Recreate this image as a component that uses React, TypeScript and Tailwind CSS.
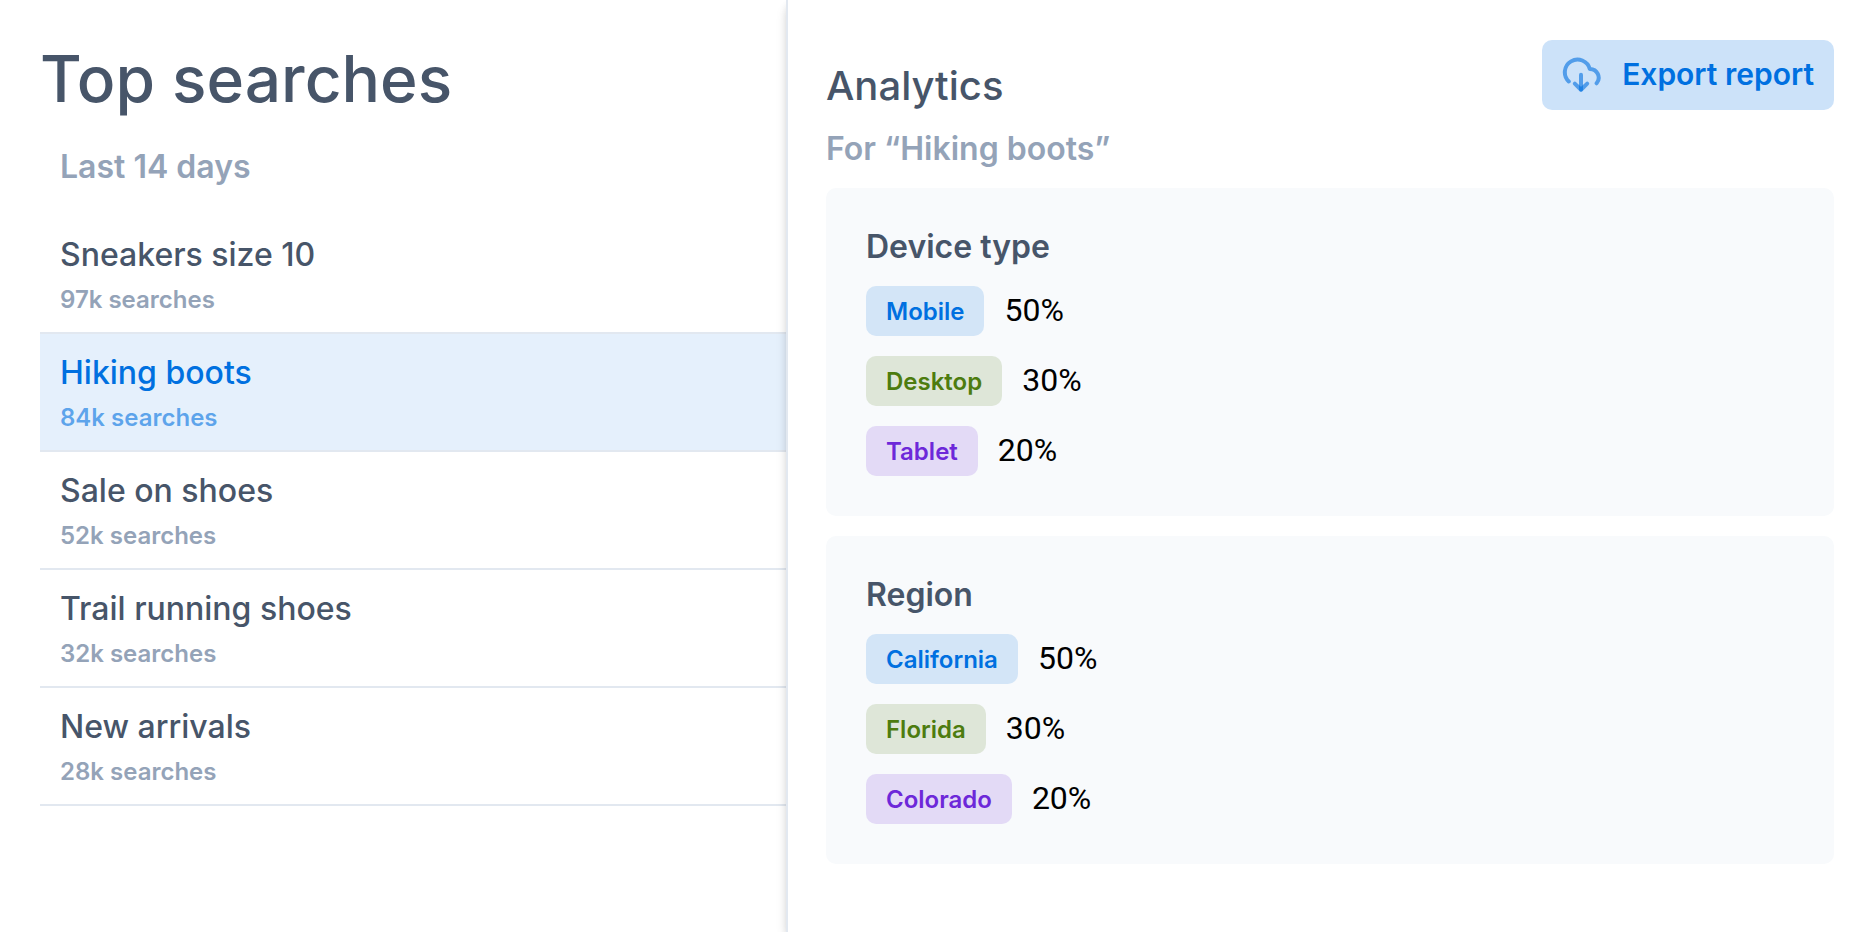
import { useState } from 'react';

interface Search {
  term: string;
  count: string;
}

interface Share {
  label: string;
  percent: number;
}

const searches: Search[] = [
  { term: 'Sneakers size 10', count: '97k' },
  { term: 'Hiking boots', count: '84k' },
  { term: 'Sale on shoes', count: '52k' },
  { term: 'Trail running shoes', count: '32k' },
  { term: 'New arrivals', count: '28k' },
];

const devices: Share[] = [
  { label: 'Mobile', percent: 50 },
  { label: 'Desktop', percent: 30 },
  { label: 'Tablet', percent: 20 },
];

const regions: Share[] = [
  { label: 'California', percent: 50 },
  { label: 'Florida', percent: 30 },
  { label: 'Colorado', percent: 20 },
];

const tagColors = [
  'bg-[#0070e0]/15 text-[#0070e0]',
  'bg-[#4d7c0f]/15 text-[#4d7c0f]',
  'bg-[#6d28d9]/15 text-[#6d28d9]',
];

function CloudDownloadIcon() {
  return (
    <svg
      className="size-10"
      viewBox="0 0 40 40"
      fill="none"
      stroke="#0070e0"
      strokeOpacity="0.6"
      strokeWidth="4"
      strokeLinecap="round"
      strokeLinejoin="round"
      aria-hidden="true"
    >
      <path d="M6.8 26.5A12.7 12.7 0 1 1 27.8 14A8.7 8.7 0 0 1 34.6 28.3" />
      <path d="M19 19.7V34.5" />
      <path d="M12.8 28.6L19 34.7L25.2 28.6" />
    </svg>
  );
}

function ShareCard({ title, shares }: { title: string; shares: Share[] }) {
  return (
    <section className="rounded-[10px] bg-[#f8fafc] p-10">
      <h3 className="text-[32px] leading-[38px] font-semibold">{title}</h3>
      <ul className="mt-5 space-y-5">
        {shares.map((share, i) => (
          <li key={share.label} className="flex items-center gap-5">
            <span className={`rounded-[10px] px-5 pt-[10px] pb-2 text-2xl leading-8 font-semibold ${tagColors[i]}`}>
              {share.label}
            </span>
            <span className="pb-0.5 font-['Roboto',sans-serif] text-[32px] leading-[38px] text-black">
              {share.percent}%
            </span>
          </li>
        ))}
      </ul>
    </section>
  );
}

export default function App() {
  const [selected, setSelected] = useState('Hiking boots');

  return (
    <div className="grid min-h-screen grid-cols-[393fr_544fr] bg-white font-['Inter',sans-serif] text-[#475569]">
      {/* Searches */}
      <aside className="pt-10 pl-10">
        <h1 className="text-[64px] leading-[78px] font-medium">Top searches</h1>
        <p className="px-5 py-[30px] text-[32px] leading-[38px] font-semibold text-[#94a3b8]">Last 14 days</p>
        <ul>
          {searches.map(({ term, count }) => {
            const active = term === selected;
            return (
              <li key={term} className="border-b-2 border-[#e2e8f0]">
                <button
                  type="button"
                  onClick={() => setSelected(term)}
                  className={`block w-full px-5 py-4 text-left ${active ? 'bg-[#0070e0]/10 text-[#0070e0]' : ''}`}
                >
                  <span className="block text-[32px] leading-[46px] font-medium">{term}</span>
                  <span
                    className={`mt-1.5 block text-2xl leading-8 font-semibold ${active ? 'text-[#0070e0]/60' : 'text-[#94a3b8]'}`}
                  >
                    {count} searches
                  </span>
                </button>
              </li>
            );
          })}
        </ul>
      </aside>

      {/* Details for the selected search */}
      <main className="border-l-2 border-[#e2e8f0] bg-white py-10 pr-10 pl-[38px] shadow-[0_8px_12px_-2px_rgba(0,0,0,0.14),0_4px_8px_-2px_rgba(0,0,0,0.14)]">
        <header className="flex items-end justify-between">
          <h2 className="text-[40px] leading-12 font-medium">Analytics</h2>
          <button
            type="button"
            className="flex items-center gap-5 rounded-[10px] bg-[#0070e0]/20 px-5 py-[15px] text-[30px] leading-[38px] font-semibold text-[#0070e0]"
          >
            <CloudDownloadIcon />
            <span className="pb-0.5">Export report</span>
          </button>
        </header>
        <p className="my-5 text-[32px] leading-[38px] font-semibold text-[#94a3b8]">For “{selected}”</p>
        <div className="space-y-5">
          <ShareCard title="Device type" shares={devices} />
          <ShareCard title="Region" shares={regions} />
        </div>
      </main>
    </div>
  );
}
